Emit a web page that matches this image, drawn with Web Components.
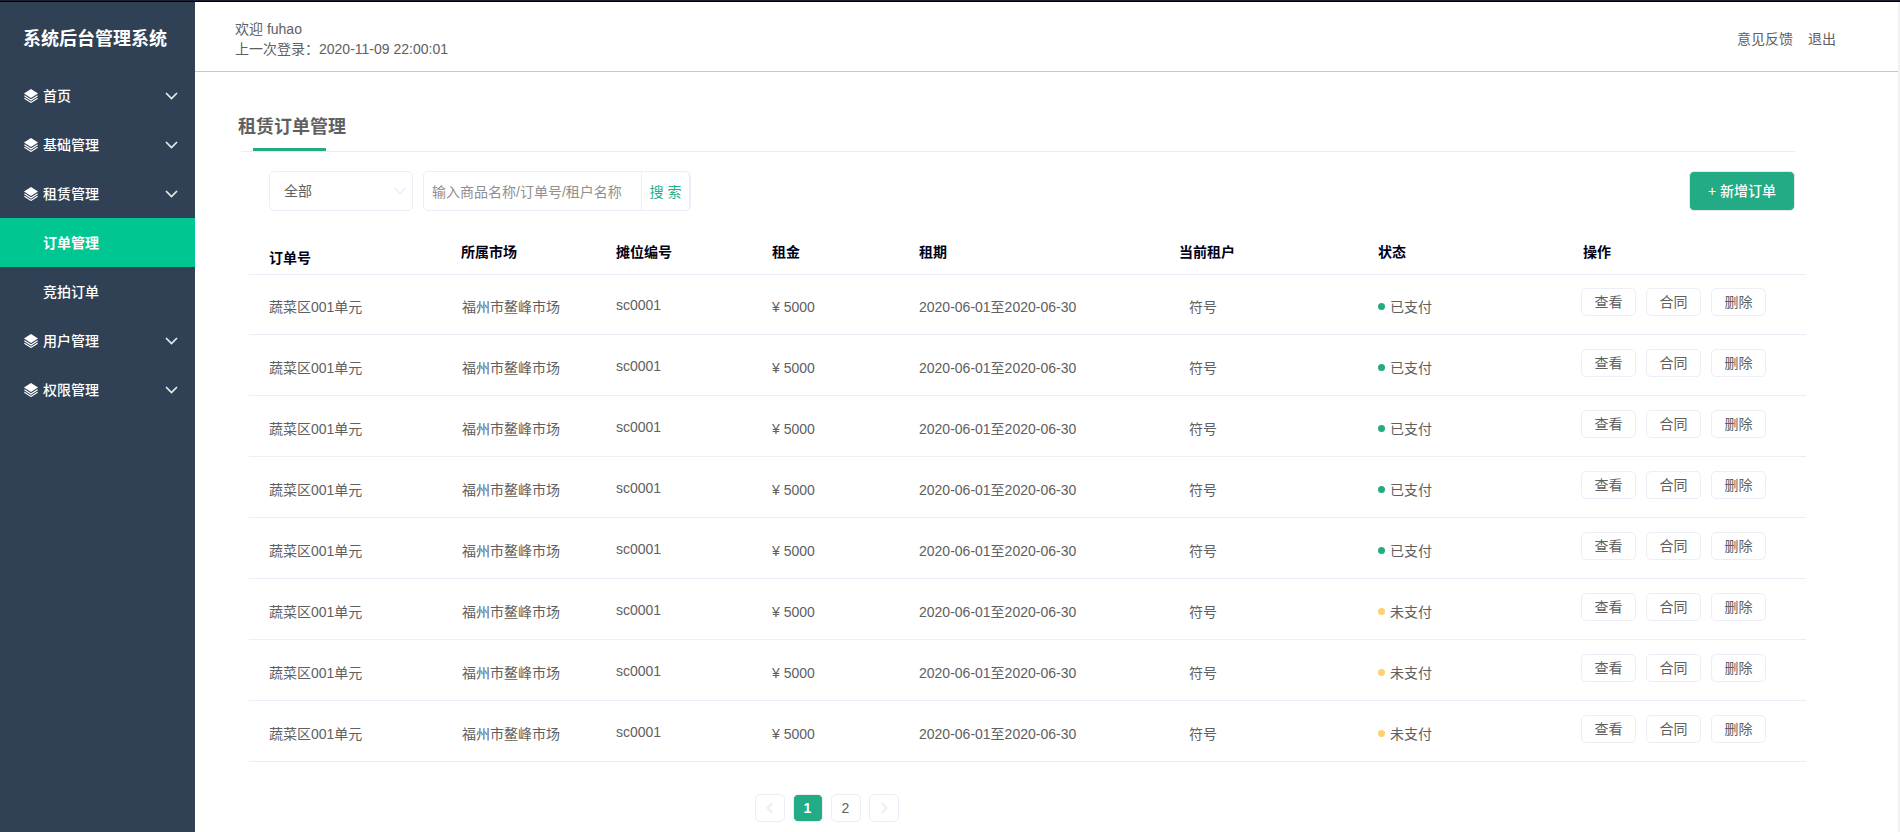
<!DOCTYPE html>
<html lang="zh-CN">
<head>
<meta charset="utf-8">
<title>系统后台管理系统</title>
<style>
html,body{margin:0;min-height:100%}
body{background:#fff;color:#606060;font:14px/20px "Liberation Sans","Noto Sans CJK SC",sans-serif}
</style>
</head>
<body>
<admin-app>
  <side-menu slot="side" label="系统后台管理系统">
    <menu-entry kind="group">首页</menu-entry>
    <menu-entry kind="group">基础管理</menu-entry>
    <menu-entry kind="group">租赁管理</menu-entry>
    <menu-entry active>订单管理</menu-entry>
    <menu-entry>竞拍订单</menu-entry>
    <menu-entry kind="group">用户管理</menu-entry>
    <menu-entry kind="group">权限管理</menu-entry>
  </side-menu>
  <top-bar slot="top" user="fuhao" last="2020-11-09 22:00:01"></top-bar>
  <page-title>租赁订单管理</page-title>
  <filter-bar></filter-bar>
  <order-table></order-table>
  <page-nav></page-nav>
</admin-app>
<script>
class Base extends HTMLElement {
  connectedCallback() {
    if (this.shadowRoot) return;
    this.attachShadow({ mode: 'open' }).innerHTML =
      '<style>*{box-sizing:border-box}button,input,select{font:inherit;color:inherit;margin:0}a{color:inherit;text-decoration:none}button{cursor:pointer}</style>' + this.render();
  }
}

customElements.define('admin-app', class extends Base {
  render() {
    return `<style>
      :host{display:flex;flex-direction:column;min-height:100vh;background:#fff}
      .strip{height:2px;background:#1c1f30;border-bottom:1px solid #000}
      .frame{display:flex;flex:1;border-right:2px solid #f1f1f1}
      .main{flex:1;min-width:0}
      main{padding:31px 92px 0 43px}
    </style>
    <div class="strip"></div>
    <div class="frame"><slot name="side"></slot>
      <div class="main"><slot name="top"></slot><main><slot></slot></main></div>
    </div>`;
  }
});

customElements.define('side-menu', class extends Base {
  render() {
    return `<style>
      :host{display:block;flex:none;width:195px;background:#304156;color:#fff}
      h1{margin:0;height:69px;padding:4px 0 0 23px;font-size:18px;line-height:66px;font-weight:700;white-space:nowrap}
    </style>
    <h1>${this.getAttribute('label')}</h1><nav><slot></slot></nav>`;
  }
});

customElements.define('menu-entry', class extends Base {
  render() {
    const group = this.getAttribute('kind') === 'group';
    return `<style>
      :host{display:block}
      :host([active]){background:#00c692;font-weight:700}
      a{display:flex;align-items:center;height:49px;padding:0 17px 0 24px}
      .lead{width:14px;height:14px;margin-right:5px}
      .text{flex:1;font-weight:500}
      :host([active]) .text{font-weight:700}
    </style>
    <a href="#">
      <svg class="lead" viewBox="0 0 14 14">${group ? `
        <path d="M7 0 14 4.500 7 9 0 4.500Z" fill="#fff"/>
        <path d="M.4 6.800 7 11 13.600 6.800M.4 9.200 7 13.400 13.600 9.200" fill="none" stroke="#fff" stroke-width="1.200"/>` : ''}</svg>
      <span class="text"><slot></slot></span>
      ${group ? '<svg width="13" height="8" viewBox="0 0 13 8" fill="none" stroke="#e8ebee" stroke-width="1.700"><path d="M1 1 6.500 6.500 12 1"/></svg>' : ''}
    </a>`;
  }
});

customElements.define('top-bar', class extends Base {
  render() {
    return `<style>
      :host{display:flex;justify-content:space-between;align-items:center;height:70px;padding:4px 62px 0 40px;border-bottom:1px solid #c8c8c8;box-sizing:border-box}
      p{margin:0}
      nav{display:flex;gap:15px}
    </style>
    <div><p>欢迎 ${this.getAttribute('user')}</p><p>上一次登录：${this.getAttribute('last')}</p></div>
    <nav><a href="#">意见反馈</a><a href="#">退出</a></nav>`;
  }
});

customElements.define('page-title', class extends Base {
  render() {
    return `<style>
      :host{display:block;margin-right:11px}
      h2{margin:0;height:45px;font-size:18px;line-height:48px;font-weight:700}
      .rule{margin-left:3px;padding-left:12px;border-bottom:1px solid #ededed}
      .mark{width:73px;height:3px;background:#22ab84}
    </style>
    <h2><slot></slot></h2><div class="rule"><div class="mark"></div></div>`;
  }
});

customElements.define('filter-bar', class extends Base {
  render() {
    return `<style>
      :host{display:flex;align-items:center;gap:10px;padding:19px 11px 0 31px}
      .pick{display:grid;width:144px;height:40px}
      .pick>*{grid-area:1/1}
      select{appearance:none;border:1px solid #ecedf6;border-radius:5px;background:#fff;padding:0 14px}
      .pick svg{justify-self:end;align-self:center;margin-right:7px;pointer-events:none}
      form{display:flex;width:268px;height:40px;border:1px solid #ecedf6;border-radius:5px;overflow:hidden}
      input{flex:1;min-width:0;border:0;padding:2px 8px 0;outline:0;background:none}
      input::placeholder{color:#909090;opacity:1}
      .go{width:49px;border:1px solid #ecedf6;border-width:0 1px 0 1px;border-radius:0 5px 5px 0;background:#fff;color:#22b18c;padding:2px 0 0}
      .add{margin-left:auto;width:106px;height:40px;border:1px solid #e4e9ee;border-radius:5px;background:#22ab84;color:#fff;padding:0;font-weight:500}
    </style>
    <div class="pick"><select aria-label="状态"><option>全部</option></select>
      <svg width="12" height="8" viewBox="0 0 12 8" fill="none" stroke="#ecedf6" stroke-width="1.500"><path d="M.5 1 6 6.500 11.500 1"/></svg></div>
    <form><input aria-label="搜索" placeholder="输入商品名称/订单号/租户名称"><button class="go" type="button">搜 索</button></form>
    <button class="add">+ 新增订单</button>`;
  }
});

customElements.define('order-table', class extends Base {
  render() {
    const widths = [212, 155, 156, 147, 260, 199, 203, 225];
    const heads = ['订单号', '所属市场', '摊位编号', '租金', '租期', '当前租户', '状态', '操作'];
    const row = paid => `<tr><td>蔬菜区001单元</td><td>福州市鳌峰市场</td><td>sc0001</td><td>¥ 5000</td>
      <td>2020-06-01至2020-06-30</td><td>符号</td>
      <td><span class="state${paid ? '' : ' due'}">${paid ? '已支付' : '未支付'}</span></td>
      <td><div class="ops"><button>查看</button><button>合同</button><button>删除</button></div></td></tr>`;
    return `<style>
      :host{display:block;margin:24px 0 0 11px}
      table{width:100%;table-layout:fixed;border-collapse:separate;border-spacing:0;text-align:left}
      th{height:40px;padding:0 0 12px;color:#000016;font-weight:700;vertical-align:bottom}
      th,td{border-bottom:1px solid #ecedf6;white-space:nowrap}
      td{height:61px;padding:0 0 17px;vertical-align:bottom}
      tbody tr:first-child td{height:60px}
      th:first-child,td:first-child{padding-left:20px}
      th:first-child{padding-bottom:6px}
      th:last-child{padding-left:2px}
      td:nth-child(2){padding-left:1px}
      td:nth-child(3){padding-bottom:19px}
      td:nth-child(6){padding-left:10px}
      td:last-child{padding-bottom:18px}
      .state{display:flex;align-items:center;gap:5px}
      .state::before{content:"";width:7px;height:7px;margin-bottom:2px;border-radius:50%;background:#22ab84}
      .state.due::before{background:#fbd26f}
      .ops{display:flex;gap:10px}
      .ops button{width:55px;height:28px;padding:0;border:1px solid #ecedf6;border-radius:5px;background:#fff}
    </style>
    <table><colgroup>${widths.map(w => `<col style="width:${w}px">`).join('')}</colgroup>
    <thead><tr>${heads.map(h => `<th>${h}</th>`).join('')}</tr></thead>
    <tbody>${[1, 1, 1, 1, 1, 0, 0, 0].map(row).join('')}</tbody></table>`;
  }
});

customElements.define('page-nav', class extends Base {
  render() {
    const arrow = d => `<svg width="8" height="12" viewBox="0 0 8 12" fill="none" stroke="#ecedf6" stroke-width="2"><path d="${d}"/></svg>`;
    return `<style>
      :host{display:flex;justify-content:center;gap:8px;padding:32px 391px 10px 0}
      button{display:grid;place-items:center;width:30px;height:28px;padding:0;border:1px solid #ecedf6;border-radius:5px;background:#fff}
      .on{background:#22ab84;color:#fff;font-weight:700}
    </style>
    <button aria-label="上一页">${arrow('M6.500 1 1.500 6 6.500 11')}</button><button class="on">1</button><button>2</button><button aria-label="下一页">${arrow('M1.500 1 6.500 6 1.500 11')}</button>`;
  }
});
</script>
</body>
</html>
